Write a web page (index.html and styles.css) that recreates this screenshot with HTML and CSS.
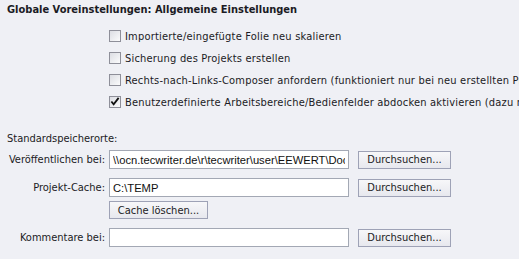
FILE: index.html
```html
<!DOCTYPE html>
<html lang="de">

<head>
    <meta charset="UTF-8">
    <title>Globale Voreinstellungen</title>
    <link rel="stylesheet" href="styles.css">
</head>

<body>
    <div class="panel">
        <h1 class="title">Globale Voreinstellungen: Allgemeine Einstellungen</h1>

        <div class="options">
            <label class="option"><span class="box"></span>Importierte/eingefügte Folie neu skalieren</label>
            <label class="option"><span class="box"></span>Sicherung des Projekts erstellen</label>
            <label class="option"><span class="box"></span>Rechts-nach-Links-Composer anfordern (funktioniert nur bei neu erstellten Projekten)</label>
            <label class="option">
                <span class="box">
                    <svg width="11" height="11" viewBox="0 0 11 11"><path d="M1.5 5.5 L4 8.5 L9.5 1.5" fill="none" stroke="#111" stroke-width="2"/></svg>
                </span>Benutzerdefinierte Arbeitsbereiche/Bedienfelder abdocken aktivieren (dazu muss das Programm neu gestartet werden)
            </label>
        </div>

        <div class="section">Standardspeicherorte:</div>

        <div class="row first">
            <span class="lbl">Veröffentlichen bei:</span>
            <input class="field" type="text" value="\\ocn.tecwriter.de\r\tecwriter\user\EEWERT\Documents">
            <button class="btn browse" type="button">Durchsuchen...</button>
        </div>
        <div class="row">
            <span class="lbl">Projekt-Cache:</span>
            <input class="field" type="text" value="C:\TEMP">
            <button class="btn browse" type="button">Durchsuchen...</button>
        </div>
        <div class="row cache">
            <span class="lbl"></span>
            <button class="btn clear" type="button">Cache löschen...</button>
        </div>
        <div class="row">
            <span class="lbl">Kommentare bei:</span>
            <input class="field" type="text" value="">
            <button class="btn browse" type="button">Durchsuchen...</button>
        </div>
    </div>
</body>

</html>
```

FILE: styles.css
```css
body {
    margin: 0;
    background: #eff0f5;
    font-family: "DejaVu Sans Condensed", "DejaVu Sans", sans-serif;
    font-size: 11px;
    color: #1b1b24;
}

.panel {
    padding: 3px 7px;
    overflow: hidden;
    white-space: nowrap;
}

.title {
    margin: 0;
    font-size: 11px;
    font-weight: bold;
    line-height: 14px;
}

.options {
    margin: 8px 0 0 102px;
    letter-spacing: 0.2px;
}

.option {
    display: flex;
    align-items: center;
    height: 22px;
}

.box {
    box-sizing: border-box;
    width: 12px;
    height: 12px;
    margin-right: 4px;
    border: 1px solid #8e8f99;
    background: linear-gradient(135deg, #dcdde3, #fbfbfc);
    flex: none;
    display: flex;
}

.box svg {
    margin: -1px 0 0 0;
}

.section {
    margin-top: 19px;
    height: 14px;
    line-height: 14px;
}

.row {
    display: flex;
    align-items: center;
    height: 19px;
    margin-top: 9px;
}

.row.first {
    margin-top: 4px;
}

.row.cache {
    height: 18px;
    margin-top: 4px;
}

.lbl {
    width: 98px;
    padding-right: 4px;
    text-align: right;
    flex: none;
}

.field {
    box-sizing: border-box;
    width: 240px;
    height: 19px;
    margin: 0;
    padding: 0 3px;
    border: 1px solid #a3a8b4;
    background: #fff;
    font-family: "Liberation Sans", Arial, sans-serif;
    font-size: 11.2px;
    color: #111;
}

.btn {
    box-sizing: border-box;
    height: 18px;
    margin: 0;
    padding: 0;
    border: 1px solid #9ea2b6;
    background: linear-gradient(#f7f7f9, #e7e8ee);
    font-family: inherit;
    font-size: 11px;
    color: #1b1b24;
}

.browse {
    width: 93px;
    margin-left: 9px;
}

.clear {
    width: 99px;
}
```
